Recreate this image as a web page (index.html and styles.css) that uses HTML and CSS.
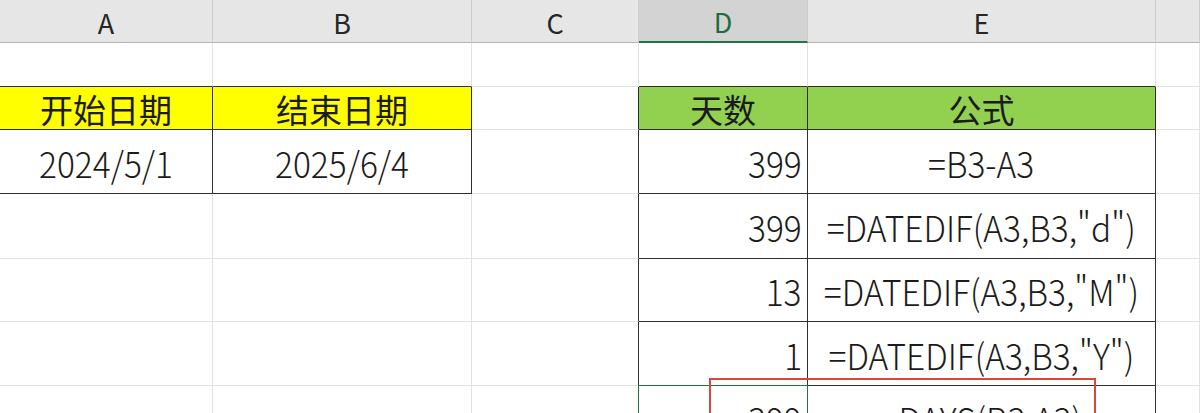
FILE: index.html
```html
<!DOCTYPE html>
<html lang="zh-CN">
<head>
<meta charset="utf-8">
<title>日期差计算</title>
<link rel="stylesheet" href="styles.css">
</head>
<body>
<div class="sheet">
  <div class="grid">
    <div class="cell hd">A</div>
    <div class="cell hd">B</div>
    <div class="cell hd">C</div>
    <div class="cell hd hd-sel">D</div>
    <div class="cell hd">E</div>
    <div class="cell hd"></div>

    <div class="cell db"></div>
    <div class="cell db"></div>
    <div class="cell"></div>
    <div class="cell db"></div>
    <div class="cell db"></div>
    <div class="cell"></div>

    <div class="cell yellow dr db cjk">开始日期</div>
    <div class="cell yellow dr db cjk">结束日期</div>
    <div class="cell dr"></div>
    <div class="cell green dr db cjk">天数</div>
    <div class="cell green dr db cjk">公式</div>
    <div class="cell"></div>

    <div class="cell dr db val"><span class="t">2024/5/1</span></div>
    <div class="cell dr db val"><span class="t">2025/6/4</span></div>
    <div class="cell dr"></div>
    <div class="cell dr db val num"><span class="t">399</span></div>
    <div class="cell dr db val"><span class="t">=B3-A3</span></div>
    <div class="cell"></div>

    <div class="cell"></div>
    <div class="cell"></div>
    <div class="cell dr"></div>
    <div class="cell dr db val num"><span class="t">399</span></div>
    <div class="cell dr db val"><span class="t">=DATEDIF(A3,B3,"d")</span></div>
    <div class="cell"></div>

    <div class="cell"></div>
    <div class="cell"></div>
    <div class="cell dr"></div>
    <div class="cell dr db val num"><span class="t">13</span></div>
    <div class="cell dr db val"><span class="t">=DATEDIF(A3,B3,"M")</span></div>
    <div class="cell"></div>

    <div class="cell"></div>
    <div class="cell"></div>
    <div class="cell dr"></div>
    <div class="cell dr db val num"><span class="t">1</span></div>
    <div class="cell dr db val"><span class="t">=DATEDIF(A3,B3,"Y")</span></div>
    <div class="cell"></div>

    <div class="cell"></div>
    <div class="cell"></div>
    <div class="cell dr"></div>
    <div class="cell dr val num selected"><span class="t">399</span></div>
    <div class="cell dr val"><span class="t">=DAYS(B3,A3)</span></div>
    <div class="cell"></div>
  </div>
  <div class="mark"></div>
</div>
</body>
</html>
```
FILE: styles.css
```css
* { box-sizing: border-box; }
html, body {
  margin: 0;
  padding: 0;
  background: #ffffff;
  overflow: hidden;
}
body {
  width: 1200px;
  height: 413px;
  font-family: "Noto Sans CJK SC", "Noto Sans", sans-serif;
  color: #1b1b1b;
}
.sheet {
  position: relative;
  width: 1200px;
  height: 413px;
  overflow: hidden;
}
.grid {
  display: grid;
  grid-template-columns: 213px 259px 167px 169px 348px 44px;
  grid-template-rows: 43px 44px 43px 64px 65px 63px 64px 64px;
}
.cell {
  display: flex;
  align-items: center;
  justify-content: center;
  border-right: 1px solid #e2e2e2;
  border-bottom: 1px solid #e2e2e2;
  white-space: nowrap;
  overflow: visible;
}
.hd {
  background: #e6e6e6;
  border-right: 1px solid #cdcdcd;
  border-bottom: 1px solid #b4b4b4;
  font-size: 27px;
  color: #262626;
  padding-top: 2px;
}
.hd-sel {
  background: #d3d3d3;
  color: #1e6b3f;
  border-bottom: 2px solid #217346;
}
.dr { border-right-color: #2f2f2f; }
.db { border-bottom-color: #2f2f2f; }
.yellow { background: #ffff00; }
.green { background: #92d050; }
.cjk {
  font-size: 33px;
  padding-top: 2px;
}
.val {
  font-size: 36px;
  font-weight: 300;
}
.t {
  display: inline-block;
  transform: scaleX(0.93);
  transform-origin: center;
}
.num {
  justify-content: flex-end;
  padding-right: 5px;
}
.num .t {
  transform-origin: right center;
}
.selected {
  position: relative;
}
.selected::after {
  content: "";
  position: absolute;
  left: -1px;
  top: -1px;
  right: -1px;
  bottom: -1px;
  border: 1px solid #217346;
}
.mark {
  position: absolute;
  left: 709px;
  top: 378px;
  width: 387px;
  height: 70px;
  border: 2px solid #d9463f;
}
```
